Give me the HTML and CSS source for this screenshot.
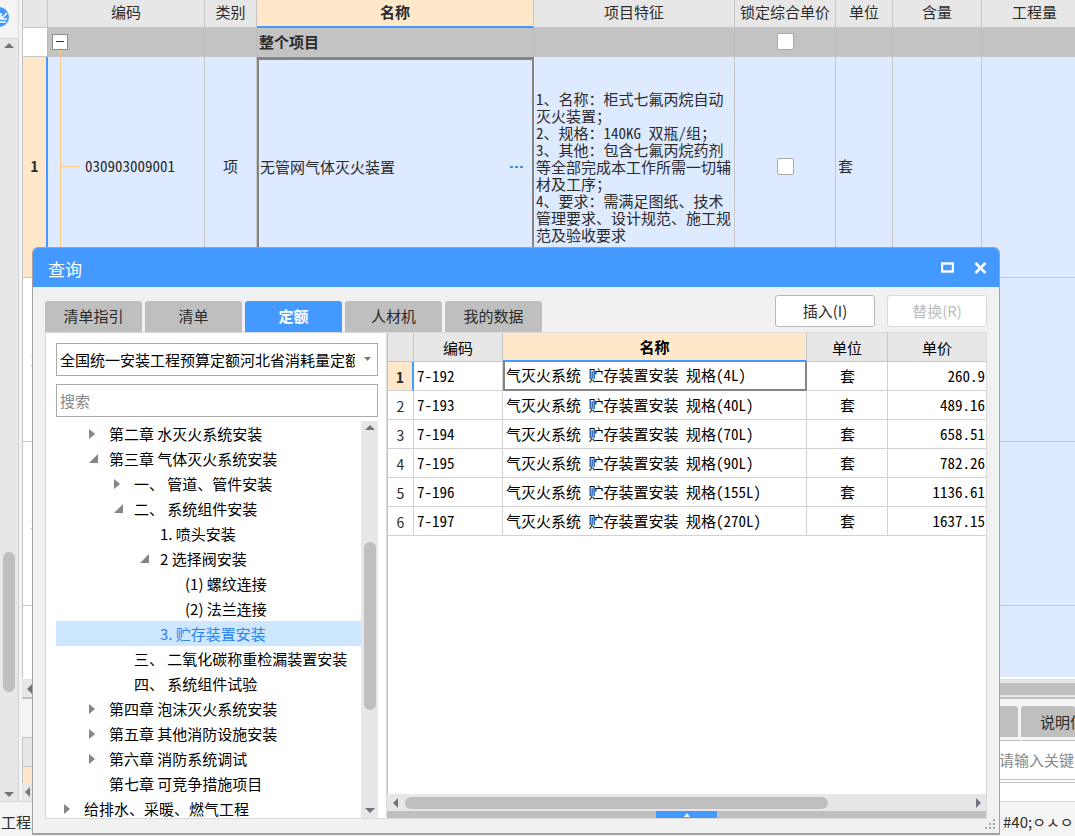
FILE: index.html
```html
<!DOCTYPE html>
<html lang="zh-CN">
<head>
<meta charset="utf-8">
<title>查询</title>
<link rel="stylesheet" href="styles.css">
</head>
<body>
<div class="app">
  <div class="workspace">
    <aside class="rail">
      <div class="rail-top">
        <button class="rail-btn" aria-label="展开"><svg width="20" height="20" viewBox="0 0 20 20"><circle cx="10" cy="10" r="10" fill="#4399ff"/><path d="M18 6l-5 5M12 6v6h6M10 15h7" fill="none" stroke="#fff" stroke-width="1.6"/></svg></button>
      </div>
      <div class="vbar rail-bar">
        <i class="tri up"></i><div class="rail-thumb"></div><i class="tri down"></i>
      </div>
    </aside>
    <main class="main">
      <div class="sheet">
        <table class="bill">
          <colgroup><col class="b-no"><col class="b-code"><col class="b-kind"><col class="b-name"><col class="b-feat"><col class="b-lock"><col class="b-unit"><col class="b-cont"><col></colgroup>
          <thead>
            <tr><th></th><th>编码</th><th>类别</th><th class="current">名称</th><th>项目特征</th><th>锁定综合单价</th><th>单位</th><th>含量</th><th>工程量</th></tr>
          </thead>
          <tbody>
            <tr class="group"><td class="no"></td><td class="tree-root"><button class="fold" aria-label="折叠"></button></td><td></td><td class="name">整个项目</td><td></td><td class="mid"><input type="checkbox" aria-label="锁定整个项目"></td><td></td><td></td><td></td></tr>
            <tr class="item active"><td class="no">1</td><td class="tree-leaf"><span class="hw">030903009001</span></td><td class="mid">项</td>
              <td class="editing"><div class="edit"><span>无管网气体灭火装置</span><button class="more" aria-label="更多"><svg width="14" height="4" viewBox="0 0 14 4"><path d="M0 1h3v2H0zM5 1h3v2H5zM10 1h3v2h-3z" fill="#3c94e0"/></svg></button></div></td>
              <td class="feature"><span class="hw">1</span>、名称：柜式七氟丙烷自动灭火装置；<br><span class="hw">2</span>、规格：<span class="hw">140KG </span>双瓶<span class="hw">/</span>组；<br><span class="hw">3</span>、其他：包含七氟丙烷药剂等全部完成本工作所需一切辅材及工序；<br><span class="hw">4</span>、要求：需满足图纸、技术管理要求、设计规范、施工规范及验收要求</td>
              <td class="mid"><input type="checkbox" aria-label="锁定综合单价"></td><td>套</td><td></td><td></td></tr>
            <tr class="row"><td class="no">2</td><td></td><td></td><td></td><td></td><td></td><td></td><td></td><td></td></tr>
            <tr class="row"><td class="no">3</td><td></td><td></td><td></td><td></td><td></td><td></td><td></td><td></td></tr>
            <tr class="row"><td class="no"></td><td></td><td></td><td></td><td></td><td></td><td></td><td></td><td></td></tr>
          </tbody>
        </table>
      </div>
      <div class="sheet-bar"><i class="tri left"></i><div class="sheet-thumb"></div></div>
      <section class="lower">
        <div class="lower-left">
          <div class="lower-head"></div>
          <div class="lower-row"></div>
          <div class="lower-bar"><i class="tri left"></i></div>
        </div>
        <div class="lower-right">
          <div class="lower-tabs"><button class="ltab first">内容指引</button><button class="ltab last">说明信息</button></div>
          <div class="keyword"><input type="text" placeholder="请输入关键字" aria-label="关键字"></div>
          <div class="lower-blank"></div>
        </div>
      </section>
    </main>
  </div>
  <footer class="status"><span>工程</span><span class="status-right">#40;ㅇㅅㅇ</span></footer>
</div>

<div class="dialog" role="dialog" aria-label="查询">
  <header class="title">
    <span>查询</span>
    <div class="win">
      <button aria-label="最大化"><svg width="13" height="11" viewBox="0 0 13 11"><rect x="1" y="1.500" width="11" height="8" fill="none" stroke="#fff" stroke-width="2.400"/></svg></button>
      <button aria-label="关闭"><svg width="13" height="12" viewBox="0 0 13 12"><path d="M1.500 1l10 10M11.500 1l-10 10" stroke="#fff" stroke-width="2.600"/></svg></button>
    </div>
  </header>
  <div class="content">
    <div class="top">
      <nav class="tabs">
        <button>清单指引</button><button>清单</button><button class="on">定额</button><button>人材机</button><button>我的数据</button>
      </nav>
      <div class="actions"><button>插入(I)</button><button disabled>替换(R)</button></div>
    </div>
    <div class="panes">
      <section class="catalog">
        <div class="select">
          <select aria-label="定额库"><option>全国统一安装工程预算定额河北省消耗量定额</option></select>
          <svg width="8" height="5" viewBox="0 0 8 5"><path d="M0 0h7L3.500 4z" fill="#777"/></svg>
        </div>
        <input class="search" type="text" placeholder="搜索" aria-label="搜索">
        <div class="tree">
          <ul>
            <li class="l1 shut">第二章 水灭火系统安装</li>
            <li class="l1 open">第三章 气体灭火系统安装</li>
            <li class="l2 shut">一、 管道、管件安装</li>
            <li class="l2 open">二、 系统组件安装</li>
            <li class="l3">1. 喷头安装</li>
            <li class="l3 open">2 选择阀安装</li>
            <li class="l4">(1) 螺纹连接</li>
            <li class="l4">(2) 法兰连接</li>
            <li class="l3 sel">3. 贮存装置安装</li>
            <li class="l2">三、 二氧化碳称重检漏装置安装</li>
            <li class="l2">四、 系统组件试验</li>
            <li class="l1 shut">第四章 泡沫灭火系统安装</li>
            <li class="l1 shut">第五章 其他消防设施安装</li>
            <li class="l1 shut">第六章 消防系统调试</li>
            <li class="l1">第七章 可竞争措施项目</li>
            <li class="l0 shut">给排水、采暖、燃气工程</li>
          </ul>
          <div class="vbar tree-bar"><i class="tri up"></i><div class="tree-thumb"></div><i class="tri down"></i></div>
        </div>
      </section>
      <section class="results">
        <div class="list">
          <table class="quota">
            <colgroup><col class="q-no"><col class="q-code"><col><col class="q-unit"><col class="q-price"></colgroup>
            <thead><tr><th></th><th>编码</th><th class="current">名称</th><th>单位</th><th>单价</th></tr></thead>
            <tbody>
              <tr class="active"><td class="no">1</td><td class="hw">7-192</td><td class="cell">气灭火系统<span class="hw"> </span>贮存装置安装<span class="hw"> </span>规格<span class="hw">(4L)</span></td><td class="mid">套</td><td class="num hw">260.9</td></tr>
              <tr><td class="no">2</td><td class="hw">7-193</td><td>气灭火系统<span class="hw"> </span>贮存装置安装<span class="hw"> </span>规格<span class="hw">(40L)</span></td><td class="mid">套</td><td class="num hw">489.16</td></tr>
              <tr><td class="no">3</td><td class="hw">7-194</td><td>气灭火系统<span class="hw"> </span>贮存装置安装<span class="hw"> </span>规格<span class="hw">(70L)</span></td><td class="mid">套</td><td class="num hw">658.51</td></tr>
              <tr><td class="no">4</td><td class="hw">7-195</td><td>气灭火系统<span class="hw"> </span>贮存装置安装<span class="hw"> </span>规格<span class="hw">(90L)</span></td><td class="mid">套</td><td class="num hw">782.26</td></tr>
              <tr><td class="no">5</td><td class="hw">7-196</td><td>气灭火系统<span class="hw"> </span>贮存装置安装<span class="hw"> </span>规格<span class="hw">(155L)</span></td><td class="mid">套</td><td class="num hw">1136.61</td></tr>
              <tr><td class="no">6</td><td class="hw">7-197</td><td>气灭火系统<span class="hw"> </span>贮存装置安装<span class="hw"> </span>规格<span class="hw">(270L)</span></td><td class="mid">套</td><td class="num hw">1637.15</td></tr>
            </tbody>
          </table>
        </div>
        <div class="list-bar"><i class="tri left"></i><div class="list-track"><div class="list-thumb"></div></div><i class="tri right"></i></div>
        <div class="splitter"><button aria-label="展开明细"><svg width="6" height="4" viewBox="0 0 6 4"><path d="M0 4l3-4 3 4z" fill="#fff"/></svg></button></div>
      </section>
    </div>
  </div>
  <svg class="grip" width="11" height="11" viewBox="0 0 11 11"><path d="M8 0h2v2H8zM8 4h2v2H8zM4 4h2v2H4zM8 8h2v2H8zM4 8h2v2H4zM0 8h2v2H0z" fill="#a8a8a8"/></svg>
</div>
</body>
</html>
```
FILE: styles.css
```css
*, *::before, *::after { box-sizing: border-box; }
html, body { height: 100%; }
body {
  margin: 0;
  overflow: hidden;
  position: relative;
  font: 15px/18px "Noto Sans CJK SC", sans-serif;
  color: #2b2b2b;
  background: #f4f4f4;
}
button, input, select { font: inherit; color: inherit; margin: 0; padding: 0; border: 0; background: none; border-radius: 0; }
ul { margin: 0; padding: 0; list-style: none; }
.hw { font-feature-settings: "hwid"; white-space: pre; }
.mid { text-align: center; }

.tri { width: 0; height: 0; flex: none; border: 5px solid transparent; }
.tri.up { border-top: 0; border-bottom-color: #747480; }
.tri.down { border-bottom: 0; border-top-color: #747480; }
.tri.left { border-left: 0; border-right-color: #747480; }
.tri.right { border-right: 0; border-left-color: #747480; }
.vbar { display: flex; flex-direction: column; align-items: center; background: #e7e7e7; }
.vbar .down { margin-top: auto; }

.app { height: 100%; display: flex; flex-direction: column; }
.workspace { flex: 1; min-height: 0; display: flex; }
.rail { width: 22px; flex: none; display: flex; flex-direction: column; border-right: 3px solid #f4f4f4; }
.rail-top { height: 39px; padding-top: 7px; overflow: hidden; border-bottom: 1px solid #d6d6d6; border-right: 1px solid #dcdcdc; }
.rail-btn { display: block; margin-left: -11px; width: 20px; height: 20px; }
.rail-btn svg { display: block; }
.rail-bar { flex: 1; padding: 4px 0; border-right: 1px solid #d2d2d2; }
.rail-thumb { width: 12px; height: 140px; margin-top: 504px; border-radius: 6px; background: #bfbfbf; flex: none; }
.main { flex: 1; min-width: 0; display: flex; flex-direction: column; }

.sheet { flex: 1; min-height: 0; overflow: hidden; background: #fff; border-left: 1px solid #c4c4c4; border-bottom: 2px solid #fff; }
table { border-collapse: separate; border-spacing: 0; table-layout: fixed; }
th, td { padding: 0 2px; border-right: 1px solid #c6c6c6; border-bottom: 1px solid #c6c6c6; text-align: left; font-weight: 400; }
th { text-align: center; background: #e7e7e7; }
th.current { background: #ffe7c9; font-weight: 700; border-bottom: 2px solid #4399ff; }
.no { text-align: center; background: #fff; font-size: 14px; }
.active .no { background: #ffe7c9; font-weight: 700; border-right: 2px solid #4399ff; }

.bill { width: 100%; min-width: 1065px; }
.b-no { width: 25px; }
.b-code { width: 157px; }
.b-kind { width: 52px; }
.b-name { width: 277px; }
.b-feat { width: 201px; }
.b-lock { width: 101px; }
.b-unit { width: 57px; }
.b-cont { width: 89px; }
.bill th { height: 28px; padding-bottom: 3px; }
.group td { height: 29px; padding-bottom: 1px; background: #c3c3c3; border-right-color: #bcbcbc; font-weight: 700; }
.group .no { background: #fff; }
.item td { height: 221px; padding-bottom: 2px; background: #deeaff; }
.item.active .no { background: #ffe7c9; }
.row td { height: 164px; background: #deeaff; }
.row .no { background: #fff; }
.tree-root, .tree-leaf { position: relative; }
.fold { display: block; position: relative; width: 16px; height: 16px; margin-left: 2px; background: #fff; border: 1px solid #8c8c8c; }
.fold::before { content: ""; position: absolute; left: 3px; right: 3px; top: 6px; height: 1px; background: #333; }
.tree-root::after { content: ""; position: absolute; left: 12px; bottom: 0; width: 1px; height: 6px; background: #ffc97f; }
.tree-leaf::before { content: ""; position: absolute; left: 12px; top: 0; bottom: 0; width: 1px; background: #ffc97f; }
.tree-leaf::after { content: ""; position: absolute; left: 12px; top: 109px; width: 20px; height: 1px; background: #ffc97f; }
td.tree-leaf { padding-left: 37px; }
td.editing { border: 2px solid #858585; border-top-width: 3px; padding-left: 1px; }
.edit { display: flex; align-items: center; justify-content: space-between; padding-right: 6px; }
.edit button { display: flex; }
.feature { word-break: break-all; line-height: 17px; }
.bill input { appearance: none; display: block; width: 17px; height: 17px; margin: 0 auto; border: 1px solid #a9a9a9; border-radius: 2px; background: #fff; }

.sheet-bar { height: 18px; flex: none; display: flex; align-items: center; gap: 6px; padding-left: 5px; background: #e7e7e7; border-top: 1px solid #e0e0e0; }
.sheet-thumb { flex: 1; height: 12px; background: #bfbfbf; }
.lower { height: 104px; flex: none; display: flex; border-top: 2px solid #c2c2c2; }
.lower-left, .lower-right { flex: 1; min-width: 0; display: flex; flex-direction: column; }
.lower-head { height: 30px; margin-top: 38px; background: #e7e7e7; border: 1px solid #c4c4c4; }
.lower-row { flex: 1; background: #ffe7c9; border-left: 1px solid #c4c4c4; }
.lower-bar { height: 18px; display: flex; align-items: center; padding-left: 3px; background: #e7e7e7; }
.lower-tabs { display: flex; gap: 3px; height: 42px; padding: 7px 0 3px; border-bottom: 1px solid #c2c2c2; overflow: hidden; }
.ltab { background: #bfbfbf; border-radius: 3px 3px 0 0; white-space: nowrap; }
.ltab.first { flex: 1; text-align: right; padding-right: 17px; }
.ltab.last { width: 54px; flex: none; padding-left: 19px; text-align: left; overflow: hidden; }
.keyword { height: 42px; background: #fff; border-bottom: 4px double #c2c2c2; display: flex; justify-content: flex-end; overflow: hidden; }
.keyword input { width: 76px; }
.keyword input::placeholder, .search::placeholder { color: #888; opacity: 1; }
.lower-blank { flex: 1; background: #fff; }
.status { height: 35px; flex: none; display: flex; justify-content: space-between; align-items: center; padding: 5px 0 0 1px; border-top: 1px solid #d6d6d6; white-space: nowrap; }
.status-right { width: 72px; overflow: hidden; }

.dialog { position: absolute; left: 32px; top: 247px; right: 75px; bottom: 1px; display: flex; flex-direction: column; background: #f1f1f1; border: 1px solid #a2a2a2; border-bottom-width: 2px; border-radius: 6px 6px 0 0; overflow: hidden; }
.title { height: 39px; flex: none; display: flex; justify-content: space-between; align-items: center; padding: 3px 12px 0 15px; background: #4399ff; color: #fff; font-size: 17px; }
.win { display: flex; gap: 20px; padding-bottom: 3px; }
.win button { display: flex; }
.content { flex: 1; min-height: 0; display: flex; flex-direction: column; padding: 8px 12px 14px; }
.top { display: flex; justify-content: space-between; height: 37px; flex: none; }
.tabs { display: flex; gap: 3px; padding-top: 6px; }
.tabs button { width: 97px; height: 31px; padding-bottom: 1px; background: #bfbfbf; border-radius: 3px 3px 0 0; }
.tabs .on { background: #4399ff; color: #fff; font-weight: 700; }
.actions { display: flex; gap: 12px; }
.actions button { width: 100px; height: 32px; background: #fff; border: 1px solid #b8b8b8; border-radius: 3px; }
.actions button:disabled { color: #bdbdbd; border-color: #dadada; }
.panes { flex: 1; min-height: 0; display: flex; background: #fff; border: 1px solid #dadada; }
.catalog { width: 341px; flex: none; display: flex; flex-direction: column; padding: 10px 8px 0 10px; border-right: 1px solid #dadada; }
.select { position: relative; height: 33px; flex: none; margin-bottom: 8px; color: #000; }
.select select { appearance: none; width: 100%; height: 33px; border: 1px solid #a9a9a9; padding: 0 22px 0 3px; background: #fff; overflow: hidden; }
.select svg { position: absolute; right: 6px; top: 14px; }
.search { height: 33px; flex: none; width: 100%; border: 1px solid #a9a9a9; padding: 0 3px; }
.tree { flex: 1; min-height: 0; display: flex; overflow: hidden; margin-top: 4px; color: #000; }
.tree ul { flex: 1; }
.tree li { height: 25px; line-height: 25px; display: flex; align-items: center; white-space: nowrap; }
.tree li::before { content: ""; width: 20px; height: 10px; flex: none; }
.tree .shut::before { width: 6px; margin-right: 14px; border: 5px solid transparent; border-right: 0; border-left: 6px solid #858585; }
.tree .open::before { width: 9px; height: 9px; margin-right: 11px; border-left: 9px solid transparent; border-bottom: 9px solid #858585; }
.l0 { padding-left: 8px; }
.l1 { padding-left: 33px; }
.l2 { padding-left: 58px; }
.l3 { padding-left: 84px; }
.l4 { padding-left: 109px; }
.tree .sel { background: #cce7ff; color: #2d84ee; }
.tree-bar { width: 17px; padding: 4px 0 5px; }
.tree-thumb { width: 12px; height: 168px; border-radius: 6px; background: #bfbfbf; margin-top: 112px; }
.results { flex: 1; min-width: 0; display: flex; flex-direction: column; }
.list { flex: 1; min-height: 0; overflow: hidden; border-left: 1px solid #c6c6c6; }
.quota { width: 100%; color: #000; }
.quota tr > :last-child { border-right-width: 0; }
.q-no { width: 26px; }
.q-code { width: 89px; }
.q-unit { width: 81px; }
.q-price { width: 98px; }
.quota th { height: 29px; padding-top: 1px; }
.quota td { height: 29px; padding: 0 2px 1px 3px; border-color: #d2d2d2; }
.quota td.no { color: #2b2b2b; padding: 1px 0 0; }
.quota td.mid { text-align: center; }
.quota td.num { text-align: right; padding-right: 1px; }
.quota td.cell { border: 2px solid #858585; border-top: 0; padding-left: 1px; }
.list-bar { height: 17px; flex: none; display: flex; align-items: center; gap: 7px; padding: 0 5px 0 6px; background: #e7e7e7; }
.list-track { flex: 1; }
.list-thumb { width: 75%; height: 12px; border-radius: 6px; background: #bfbfbf; }
.splitter { height: 7px; flex: none; display: flex; justify-content: center; background: #bfbfbf; }
.splitter button { width: 61px; height: 7px; display: flex; justify-content: center; align-items: center; background: #4399ff; }
.grip { position: absolute; right: 3px; bottom: 3px; }
```
